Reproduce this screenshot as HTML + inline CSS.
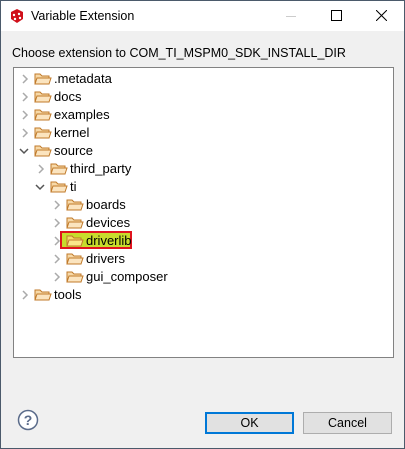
<!DOCTYPE html><html><head><style>
body{margin:0;width:405px;height:449px;overflow:hidden;font-family:"Liberation Sans",sans-serif;font-size:12px;}
.win{position:absolute;left:0;top:0;width:403px;height:447px;border:1px solid #4b5a6b;background:#f0f0f0;}
.title{position:absolute;left:0;top:0;width:403px;height:30px;background:#fff;}
.t{position:absolute;white-space:nowrap;color:#000;}
.tree{position:absolute;left:12px;top:66px;width:379px;height:289px;background:#fff;border:1px solid #828282;}
.row{position:absolute;height:18px;}
.arr{position:absolute;top:4px;}
.fold{position:absolute;top:2px;}
.lbl{position:absolute;top:1px;font-size:13px;}
.btn{position:absolute;top:411px;height:20px;width:87px;background:#e1e1e1;border:1px solid #adadad;text-align:center;line-height:20px;font-size:12.5px;}
</style></head><body><div class="win">
<div class="title">
<svg style="position:absolute;left:9px;top:8px" width="14" height="14" viewBox="0 0 14 14"><path d="M7 0L13 3V10L7 14L1 10V3Z" fill="#d0101a"/><circle cx="4" cy="6" r="1.2" fill="#fff"/><circle cx="9" cy="5" r="1.2" fill="#fff"/><circle cx="10" cy="9" r="1.2" fill="#fff"/><circle cx="5" cy="10" r="1.2" fill="#fff"/></svg>
<div class="t" style="left:30px;top:8px;font-size:12.5px">Variable Extension</div>
<div style="position:absolute;left:285px;top:15px;width:10px;height:1px;background:#ccc"></div>
<div style="position:absolute;left:330px;top:9px;width:9px;height:9px;border:1px solid #000"></div>
<svg style="position:absolute;left:375px;top:9px" width="11" height="11"><path d="M0 0L11 11M11 0L0 11" stroke="#000" stroke-width="1"/></svg>
</div>
<div class="t" style="left:11px;top:45px;font-size:12.5px">Choose extension to COM_TI_MSPM0_SDK_INSTALL_DIR</div>
<div class="tree" id="tree"></div>
<svg style="position:absolute;left:16px;top:408px" width="22" height="22"><circle cx="11" cy="11" r="9.5" fill="#fff" stroke="#5a6b8a" stroke-width="1.5"/><text x="11" y="16" text-anchor="middle" font-family="Liberation Sans" font-weight="bold" font-size="14" fill="#5a6b8a">?</text></svg>
<div class="btn" style="left:204px;border:2px solid #0078d7;height:18px;line-height:18px;width:85px">OK</div>
<div class="btn" style="left:302px">Cancel</div>
</div>
<script>
var rows=[[0,0,'.metadata'],[0,0,'docs'],[0,0,'examples'],[0,0,'kernel'],[0,1,'source'],[1,0,'third_party'],[1,1,'ti'],[2,0,'boards'],[2,0,'devices'],[2,0,'driverlib'],[2,0,'drivers'],[2,0,'gui_composer'],[0,0,'tools']];
var h='';rows.forEach(function(r,i){var x=r[0]*16,y=2+i*18;
var a=r[1]?'<svg class="arr" style="left:'+(5+x)+'px" width="10" height="10"><path d="M1 3L5 7L9 3" fill="none" stroke="#555" stroke-width="1.5"/></svg>':'<svg class="arr" style="left:'+(6+x)+'px" width="10" height="10"><path d="M3 1L7 5L3 9" fill="none" stroke="#aaa" stroke-width="1.5"/></svg>';
var sel=r[2]=='driverlib';
var f='<svg class="fold" style="left:'+(20+x)+'px" width="18" height="14"><path d="M1 2H6L8 4H15V12H1Z" fill="'+(sel?'#f6dc6a':'#f7d9a8')+'" stroke="#c07a2a"/><path d="M3 6H17L15 12H1Z" fill="'+(sel?'#fbe88a':'#fbe4bf')+'" stroke="#c07a2a"/></svg>';
var l='<div class="lbl t" style="left:'+(40+x)+'px">'+r[2]+'</div>';
if(sel) h+='<div style="position:absolute;left:'+(46)+'px;top:'+(y-1)+'px;width:72px;height:18px;background:#c8dc2c;outline:2px solid #e0141e;outline-offset:-2px"></div>';
h+='<div class="row" style="left:0;top:'+y+'px;width:370px">'+a+f+l+'</div>';});
document.getElementById('tree').innerHTML=h;
</script>
</body></html>
